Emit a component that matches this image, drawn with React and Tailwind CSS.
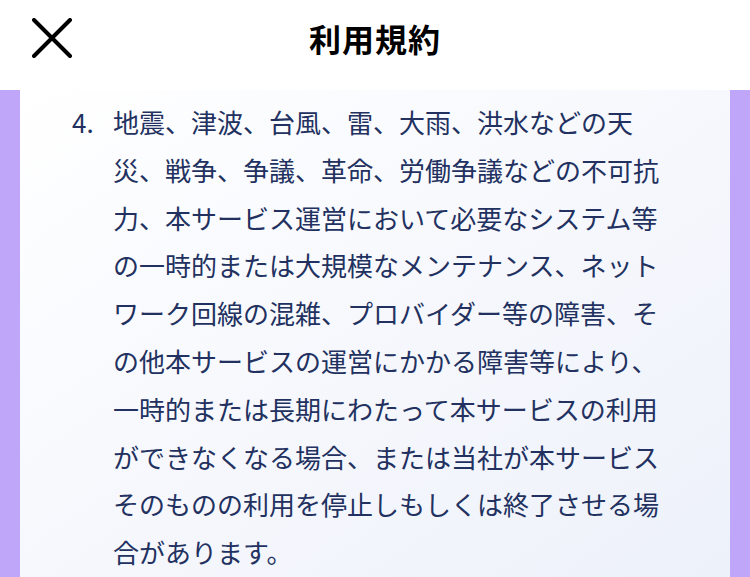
const lines = [
  '地震、津波、台風、雷、大雨、洪水などの天',
  '災、戦争、争議、革命、労働争議などの不可抗',
  '力、本サービス運営において必要なシステム等',
  'の一時的または大規模なメンテナンス、ネット',
  'ワーク回線の混雑、プロバイダー等の障害、そ',
  'の他本サービスの運営にかかる障害等により、',
  '一時的または長期にわたって本サービスの利用',
  'ができなくなる場合、または当社が本サービス',
  'そのものの利用を停止しもしくは終了させる場',
  '合があります。',
];

const CloseIcon = () => (
  <svg width="40" height="40" viewBox="0 0 40 40" fill="none">
    <path d="M2 2 L38 38 M38 2 L2 38" stroke="#000" strokeWidth="4" strokeLinecap="round" />
  </svg>
);

export default function App() {
  return (
    <div
      className="w-[750px] h-[577px] overflow-hidden bg-white flex flex-col"
      style={{ fontFamily: '"Noto Sans CJK JP", "Noto Sans", sans-serif' }}
    >
      {/* Header */}
      <div className="h-[90px] shrink-0 bg-white">
        <div className="relative h-[76px] flex items-center justify-center">
          <button className="absolute left-[32px] top-[18px]">
            <CloseIcon />
          </button>
          <h1 className="text-[32px] font-bold text-black tracking-[1px]">利用規約</h1>
        </div>
      </div>

      {/* Body */}
      <div className="flex-1 bg-[#c0a6f9] px-[20px] overflow-hidden">
        <div className="h-full bg-gradient-to-br from-white via-[#f6f8fd] to-[#edf1f9] pl-[52px] pr-[20px] pt-[8px]">
          <div className="flex text-[26px] leading-[47.8px] text-[#22315f]">
            <span className="w-[41px] shrink-0">4.</span>
            <div>
              {lines.map((l, i) => (
                <div key={i} className="whitespace-nowrap">{l}</div>
              ))}
            </div>
          </div>
        </div>
      </div>
    </div>
  );
}
